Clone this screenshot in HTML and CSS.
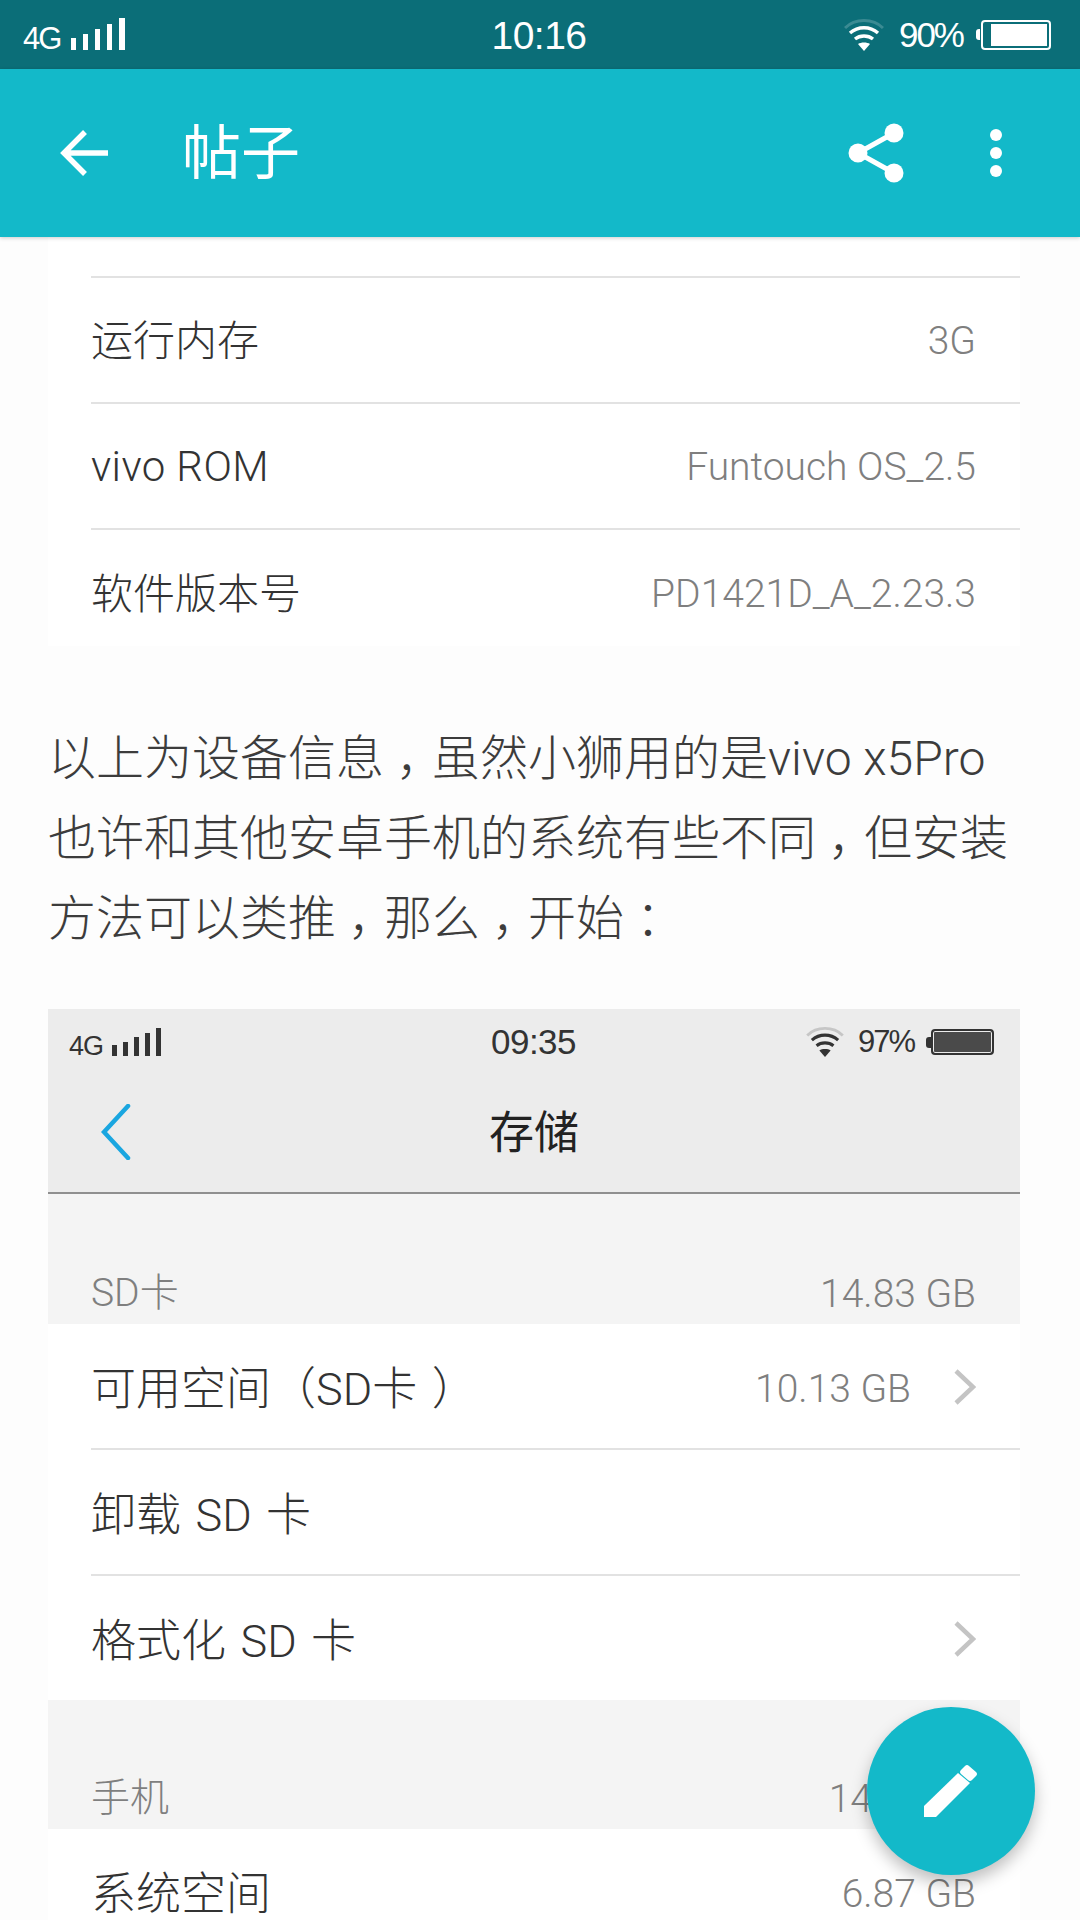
FILE: index.html
```html
<!DOCTYPE html>
<html lang="zh-CN">
<head>
  <meta charset="UTF-8" />
  <meta name="viewport" content="width=device-width, initial-scale=1.0" />
  <title>帖子</title>
  <link rel="stylesheet" href="styles.css">
</head>
<body>
  <div class="screen">
    <div class="status-bar">
      <div class="status-left">
        <span class="net">4G</span>
        <svg class="signal" width="55" height="32" viewBox="0 0 55 32"><path fill="#fff" d="M0 20h5v12H0zM12 16h5v16h-5zM24 11h5v21h-5zM36 6h5v26h-5zM48 0h6v32h-6z"/></svg>
      </div>
      <span class="clock">10:16</span>
      <div class="status-right">
        <svg class="wifi" width="40" height="32" viewBox="0 0 40 32"><path fill="none" stroke="#fff" stroke-opacity=".2" stroke-width="3" d="M1 9C11-1 29-1 39 9"/><path fill="none" stroke="#fff" stroke-width="3.4" d="M6 14c8-7 20-7 28 0M11 20c5-4 13-4 18 0"/><path fill="#fff" d="M14 25c3-2 9-2 12 0l-6 7z"/></svg>
        <span class="batt-text">90%</span>
        <div class="battery"><span class="battery-nub"></span><div class="battery-body"><div class="battery-fill"></div></div></div>
      </div>
    </div>

    <header class="app-bar">
      <svg class="back" width="48" height="48" viewBox="0 0 48 48"><path fill="none" stroke="#fff" stroke-width="5.5" d="M48 24H5M25 3 4 24l21 21"/></svg>
      <h1 class="title">帖子</h1>
      <svg class="share" width="56" height="60" viewBox="0 0 56 60"><path fill="none" stroke="#fff" stroke-width="5" d="M46 10 10 30l36 20"/><circle cx="46" cy="10" r="9.5" fill="#fff"/><circle cx="10" cy="30" r="9.5" fill="#fff"/><circle cx="46" cy="50" r="9.5" fill="#fff"/></svg>
      <div class="more"><i></i><i></i><i></i></div>
    </header>

    <main class="content">
      <section class="spec-card">
        <div class="spec-top"></div>
        <div class="row"><span class="row-name cjk">运行内存</span><span class="row-value">3G</span></div>
        <div class="row"><span class="row-name latin">vivo ROM</span><span class="row-value">Funtouch OS_2.5</span></div>
        <div class="row row-last"><span class="row-name cjk">软件版本号</span><span class="row-value">PD1421D_A_2.23.3</span></div>
      </section>

      <div class="post-text">
        <p class="post-line">以上为设备信息<span class="punct">，</span>虽然小狮用的是vivo x5Pro</p>
        <p class="post-line">也许和其他安卓手机的系统有些不同<span class="punct">，</span>但安装</p>
        <p class="post-line">方法可以类推<span class="punct">，</span>那么<span class="punct">，</span>开始<span class="punct">：</span></p>
      </div>

      <section class="shot">
        <div class="shot-top">
          <div class="shot-status">
            <div class="shot-left">
              <span class="shot-net">4G</span>
              <svg width="49" height="28" viewBox="0 0 49 28"><path fill="#333" d="M0 17h5v11H0zM11 14h5v14h-5zM22 9h5v19h-5zM33 5h5v23h-5zM44 0h5v28h-5z"/></svg>
            </div>
            <span class="shot-clock">09:35</span>
            <div class="shot-right">
              <svg width="40" height="30" viewBox="0 0 40 32"><path fill="none" stroke="#333" stroke-opacity=".2" stroke-width="3" d="M1 9C11-1 29-1 39 9"/><path fill="none" stroke="#333" stroke-width="3.4" d="M6 14c8-7 20-7 28 0M11 20c5-4 13-4 18 0"/><path fill="#333" d="M14 25c3-2 9-2 12 0l-6 7z"/></svg>
              <span class="shot-batt-text">97%</span>
              <div class="shot-battery"><span class="shot-battery-nub"></span><div class="shot-battery-body"></div></div>
            </div>
          </div>
          <div class="shot-nav">
            <svg class="shot-back" width="30" height="56" viewBox="0 0 30 56"><path fill="none" stroke="#1aa6e0" stroke-width="4.5" stroke-linecap="round" d="M27 2 3 28l24 26"/></svg>
            <span class="shot-title">存储</span>
          </div>
        </div>

        <div class="group-head first"><span class="group-name">SD卡</span><span class="group-size">14.83 GB</span></div>
        <div class="group">
          <div class="row"><span class="row-name cjk">可用空间（SD卡 ）</span><span class="row-value">10.13 GB</span><svg class="chev" width="22" height="36" viewBox="0 0 22 36"><path fill="none" stroke="#c4c4c4" stroke-width="4.5" d="M2 2l17 16L2 34"/></svg></div>
          <div class="row"><span class="row-name cjk">卸载 SD 卡</span></div>
          <div class="row"><span class="row-name cjk">格式化 SD 卡</span><svg class="chev" width="22" height="36" viewBox="0 0 22 36"><path fill="none" stroke="#c4c4c4" stroke-width="4.5" d="M2 2l17 16L2 34"/></svg></div>
        </div>
        <div class="group-head"><span class="group-name">手机</span><span class="group-size phone-size">14.8 GB</span></div>
        <div class="group">
          <div class="row"><span class="row-name cjk">系统空间</span><span class="row-value">6.87 GB</span></div>
        </div>
      </section>
    </main>

    <button class="fab" aria-label="edit">
      <svg width="56" height="56" viewBox="0 0 56 56"><path fill="#fff" d="M1 43 35 10l12 10-34 34H1z"/><path fill="#fff" d="M38 7l4-4q2-2 4 0l7 6q2 2 0 4l-4 4q-2 2-4 0l-7-6q-2-2 0-4z"/></svg>
    </button>
  </div>
</body>
</html>
```

FILE: styles.css
```css
* {
  box-sizing: border-box;
}
body {
  margin: 0;
  background: #fdfdfd;
  font-family: Roboto, "Noto Sans CJK SC", sans-serif;
  font-weight: 300;
  color: #333;
}
.screen {
  position: relative;
  width: 1080px;
  height: 1920px;
  overflow: hidden;
  display: flex;
  flex-direction: column;
}

/* status bar */
.status-bar {
  height: 69px;
  flex-shrink: 0;
  background: #0b6e78;
  color: #fff;
  font-weight: 400;
  padding: 0 29px 0 23px;
  display: grid;
  grid-template-columns: 1fr auto 1fr;
  align-items: center;
}
.status-left {
  display: flex;
  align-items: center;
  gap: 11px;
  font-family: "Liberation Sans", sans-serif;
}
.net {
  font-size: 31px;
  letter-spacing: -2px;
  margin-top: 8px;
}
.signal {
  margin-top: -2px;
}
.clock {
  font-size: 39px;
  font-family: "Liberation Sans", sans-serif;
  letter-spacing: -0.5px;
  margin: 2px 0 0 4px;
}
.status-right {
  display: flex;
  align-items: center;
  justify-content: flex-end;
  font-family: "Liberation Sans", sans-serif;
}
.wifi {
  margin-right: 15px;
}
.batt-text {
  font-size: 35px;
  letter-spacing: -2px;
  margin-right: 13px;
}
.battery {
  display: flex;
  align-items: center;
}
.battery-nub {
  width: 4px;
  height: 11px;
  background: #fff;
  border-radius: 3px 0 0 3px;
  margin-right: 1px;
}
.battery-body {
  width: 70px;
  height: 30px;
  border: 2px solid #fff;
  border-radius: 4px;
  padding: 2px 2px 2px 8px;
}
.battery-fill {
  height: 100%;
  background: #fff;
}

/* app bar */
.app-bar {
  position: relative;
  z-index: 2;
  height: 168px;
  flex-shrink: 0;
  background: #13b9c9;
  box-shadow: 0 1px 4px rgba(0, 0, 0, 0.2);
  display: flex;
  align-items: center;
  padding: 0 0 0 60px;
  color: #fff;
}
.title {
  margin: 0 0 10px 74px;
  font-size: 59px;
  font-weight: 400;
  flex: 1;
}
.share {
  margin-right: 86px;
}
.more {
  display: flex;
  flex-direction: column;
  gap: 6px;
  margin-right: 78px;
}
.more i {
  width: 12px;
  height: 12px;
  background: #fff;
  border-radius: 50%;
}

/* post */
.content {
  flex: 1;
  overflow: hidden;
  padding: 0 60px 0 48px;
}
.spec-card {
  background: #fff;
  padding-left: 43px;
}
.spec-top {
  height: 39px;
}
.row {
  height: 126px;
  border-top: 2px solid #e2e2e2;
  padding-right: 44px;
  display: flex;
  align-items: center;
  font-size: 42px;
}
.row-last {
  height: 118px;
  padding-top: 10px;
}
.row-name {
  flex: 1;
  color: #333;
}
.row-name.cjk {
  padding-bottom: 5px;
}
.row-name.latin {
  letter-spacing: 0.4px;
}
.row-value {
  font-size: 39px;
  color: #7f7f7f;
  padding-top: 2px;
}
.post-text {
  margin: 73px 0 50px;
  font-size: 48px;
  line-height: 80px;
  color: #3c3c3c;
}
.post-line {
  margin: 0;
  white-space: nowrap;
}
.punct {
  padding: 0 12px;
  font-feature-settings: "halt";
}

/* embedded screenshot */
.shot {
  background: #fff;
}
.shot-top {
  background: #ececec;
  height: 185px;
  border-bottom: 2px solid #8f8f8f;
  color: #333;
  font-weight: 400;
}
.shot-status {
  height: 66px;
  padding: 0 26px 0 21px;
  display: grid;
  grid-template-columns: 1fr auto 1fr;
  align-items: center;
  font-family: "Liberation Sans", sans-serif;
}
.shot-left {
  display: flex;
  align-items: center;
  gap: 9px;
}
.shot-net {
  font-size: 27px;
  letter-spacing: -1px;
  margin-top: 8px;
}
.shot-clock {
  font-size: 35px;
  letter-spacing: -0.5px;
  margin-left: 4px;
}
.shot-right {
  display: flex;
  align-items: center;
  justify-content: flex-end;
}
.shot-batt-text {
  font-size: 31px;
  letter-spacing: -2px;
  margin: 0 12px 0 13px;
}
.shot-battery {
  display: flex;
  align-items: center;
}
.shot-battery-nub {
  width: 5px;
  height: 11px;
  background: #333;
  border-radius: 3px 0 0 3px;
}
.shot-battery-body {
  width: 63px;
  height: 26px;
  border: 2px solid #333;
  border-radius: 4px;
  background: #4a4a4a;
  box-shadow: inset 0 0 0 1px #ececec;
}
.shot-nav {
  position: relative;
  height: 117px;
  display: flex;
  align-items: center;
  justify-content: center;
  padding-bottom: 9px;
}
.shot-back {
  position: absolute;
  left: 53px;
  top: 29px;
}
.shot-title {
  font-size: 45px;
  font-weight: 400;
  color: #222;
}
.group-head {
  height: 129px;
  background: #f4f4f4;
  padding: 0 44px 7px 43px;
  display: flex;
  align-items: flex-end;
  justify-content: space-between;
  font-size: 39px;
  color: #7f7f7f;
}
.group-head.first {
  height: 130px;
}
.phone-size {
  margin-right: 13px;
}
.group {
  background: #fff;
  padding-left: 43px;
}
.group .row {
  font-size: 45px;
  padding-top: 4px;
  word-spacing: 3.5px;
}
.group .row-value {
  font-size: 39px;
  word-spacing: 0;
}
.group .row:first-child {
  border-top: 0;
  height: 124px;
}
.chev {
  margin-left: 43px;
  margin-bottom: 3px;
}
.row-name + .chev {
  margin-left: 0;
}

.fab {
  position: absolute;
  left: 867px;
  top: 1707px;
  width: 168px;
  height: 168px;
  padding: 0;
  border: none;
  border-radius: 50%;
  background: #13b9c9;
  box-shadow: 0 8px 16px rgba(0, 0, 0, 0.25);
  display: flex;
  align-items: center;
  justify-content: center;
}
```
